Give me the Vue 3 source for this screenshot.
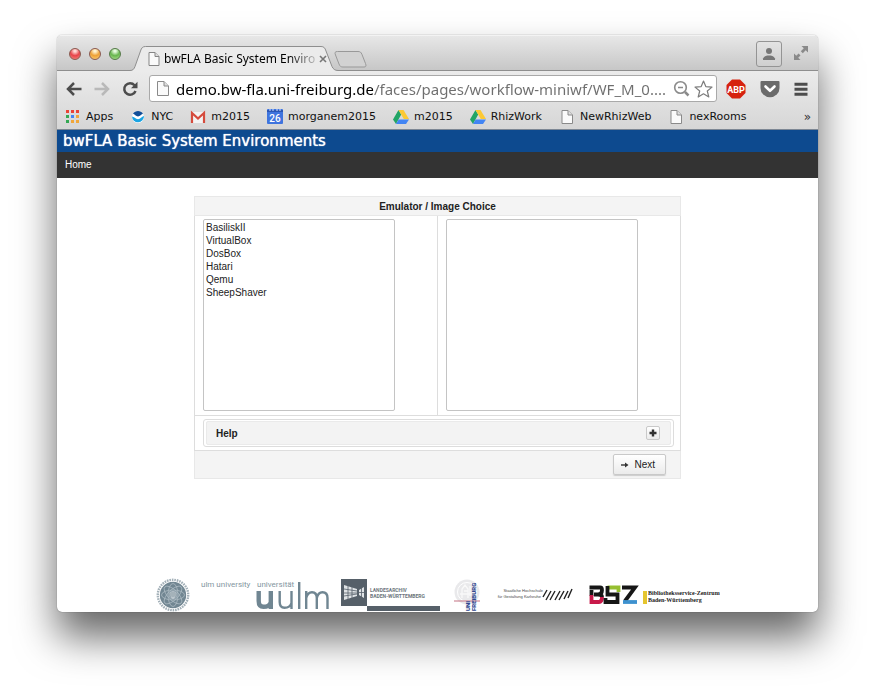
<script setup>
import { ref } from 'vue'

const address = ref('demo.bw-fla.uni-freiburg.de/faces/pages/workflow-miniwf/WF_M_0....')
const emulators = ['BasiliskII', 'VirtualBox', 'DosBox', 'Hatari', 'Qemu', 'SheepShaver']
const emulator = ref([])
const image = ref([])

const bookmarks = [
  { icon: 'apps', label: 'Apps' },
  { icon: 'noaa', label: 'NYC' },
  { icon: 'gmail', label: 'm2015' },
  { icon: 'calendar', label: 'morganem2015' },
  { icon: 'drive', label: 'm2015' },
  { icon: 'drive', label: 'RhizWork' },
  { icon: 'page', label: 'NewRhizWeb' },
  { icon: 'page', label: 'nexRooms' },
]
const appColors = ['#ea4335', '#ea4335', '#ea4335', '#34a853', '#4285f4', '#f0a63a', '#34a853', '#f0a63a', '#f0a63a']
const petals = [0, 45, 90, 135]
</script>

<template>
  <div class="desktop">
    <div class="window">
      <header class="chrome">
        <div class="titlebar">
          <div class="lights">
            <button class="light red" aria-label="Close window"></button>
            <button class="light amber" aria-label="Minimize window"></button>
            <button class="light green" aria-label="Zoom window"></button>
          </div>
          <div class="tab">
            <svg class="tab-shape" width="210" height="25" viewBox="0 0 210 25" aria-hidden="true">
              <path d="M0 25V24.500C3 24.500 4 23 5 20.500L10.500 5C11.500 2 12.500 .5 15.500 .5H191C194 .5 195 2 196 5L202 20.500C203 23 205 24.500 208 24.500H210V25Z" fill="#ebebeb" />
              <path d="M0 24.500C3 24.500 4 23 5 20.500L10.500 5C11.500 2 12.500 .5 15.500 .5H191C194 .5 195 2 196 5L202 20.500C203 23 205 24.500 208 24.500H210" fill="none" stroke="#8e8e8e" />
            </svg>
            <svg class="doc" width="12" height="14" viewBox="0 0 12 14" aria-hidden="true">
              <path d="M1 .5H7L11 4.500V13.500H1Z" fill="#fafafa" stroke="#858585" />
              <path d="M7 .5V4.500H11" fill="#ddd" stroke="#858585" />
            </svg>
            <span class="tab-title">bwFLA Basic System Enviro</span>
            <button class="tab-close" aria-label="Close tab">
              <svg width="8" height="8" viewBox="0 0 8 8"><path d="M1 1L7 7M7 1L1 7" stroke="#777" stroke-width="1.600" /></svg>
            </button>
          </div>
          <button class="new-tab" aria-label="New tab">
            <svg width="34" height="17" viewBox="0 0 34 17">
              <path d="M3.500 .5H24C26 .5 27 1 28 3.500L31.500 12.500C32.500 15 32 16 30 16H9C7 16 6 15.500 5 13L1.500 4C.5 1.500 1 .5 3.500 .5Z" fill="#d2d2d2" stroke="#999" />
            </svg>
          </button>
          <button class="profile" aria-label="Profile">
            <svg width="14" height="14" viewBox="0 0 14 14"><circle cx="7" cy="4" r="3" fill="#777" /><path d="M1 13V11.500C2 9 5 8.500 7 8.500S12 9 13 11.500V13Z" fill="#777" /></svg>
          </button>
          <button class="plain expand" aria-label="Full screen">
            <svg width="16" height="16" viewBox="0 0 16 16"><path d="M8.500 1H15V7.500L12.700 5.200L9.800 8.200L7.800 6.200L10.800 3.300ZM1 8.500L3.300 10.800L5.600 8.500L7.500 10.400L5.200 12.700L7.500 15H1Z" fill="#8a8a8a" /></svg>
          </button>
        </div>

        <div class="toolbar">
          <nav class="history" aria-label="History">
            <button class="plain" aria-label="Back">
              <svg width="16" height="16" viewBox="0 0 16 16"><path d="M8 2L2 8L8 14M2 8H15.500" fill="none" stroke="#4c4c4c" stroke-width="2.500" /></svg>
            </button>
            <button class="plain" aria-label="Forward">
              <svg width="16" height="16" viewBox="0 0 16 16"><path d="M8 2L14 8L8 14M14 8H.5" fill="none" stroke="#b9b9b9" stroke-width="2.500" /></svg>
            </button>
            <button class="plain" aria-label="Reload">
              <svg width="16" height="16" viewBox="0 0 16 16"><path d="M12.500 4.200A5.800 5.800 0 1 0 13.500 10" fill="none" stroke="#4c4c4c" stroke-width="2.500" /><path d="M15.500 .8V7.200H9Z" fill="#4c4c4c" /></svg>
            </button>
          </nav>
          <div class="omnibox">
            <svg class="doc" width="12" height="15" viewBox="0 0 12 15" aria-hidden="true">
              <path d="M.5 .5H7L11.500 5V14.500H.5Z" fill="#fafafa" stroke="#8a8a8a" />
              <path d="M7 .5V5H11.500" fill="#ddd" stroke="#8a8a8a" />
            </svg>
            <input v-model="address" class="address" type="text" aria-label="Address" spellcheck="false" />
            <button class="plain" aria-label="Zoom level">
              <svg width="17" height="17" viewBox="0 0 17 17"><circle cx="7.500" cy="7.500" r="5.800" fill="none" stroke="#8b8b8b" stroke-width="1.600" /><path d="M5 7.500H10" stroke="#8b8b8b" stroke-width="1.600" /><path d="M12 12L15.500 15.500" stroke="#8b8b8b" stroke-width="2.500" /></svg>
            </button>
            <button class="plain" aria-label="Bookmark this page">
              <svg width="19" height="18" viewBox="0 0 19 18"><path d="M9.500 1L11.800 6.600L18 7.100L13.300 11L14.800 17L9.500 13.800L4.200 17L5.700 11L1 7.100L7.200 6.600Z" fill="#fff" stroke="#7d7d7d" stroke-width="1.200" stroke-linejoin="round" /></svg>
            </button>
          </div>
          <div class="extensions">
            <button class="plain" aria-label="Adblock Plus">
              <svg width="20" height="20" viewBox="0 0 20 20"><path d="M6 .5H14L19.500 6V14L14 19.500H6L.5 14V6Z" fill="#d6220f" /><text x="10" y="13.500" text-anchor="middle" font-family="Roboto" font-weight="700" font-size="9" fill="#fff">ABP</text></svg>
            </button>
            <button class="plain" aria-label="Pocket">
              <svg width="20" height="18" viewBox="0 0 20 18"><path d="M1.500 1H18.500Q19.500 1 19.500 2V8A9.500 9.300 0 0 1 .5 8V2Q.5 1 1.500 1Z" fill="#6b6b6b" /><path d="M5.500 6.500L10 10.800L14.500 6.500" fill="none" stroke="#fff" stroke-width="2.600" stroke-linecap="round" stroke-linejoin="round" /></svg>
            </button>
            <button class="plain" aria-label="Menu">
              <svg width="14" height="14" viewBox="0 0 14 14"><path d="M.5 2.200H13.500M.5 7.200H13.500M.5 12.200H13.500" stroke="#4c4c4c" stroke-width="3" /></svg>
            </button>
          </div>
        </div>

        <nav class="bookmarks" aria-label="Bookmarks">
          <a v-for="(b, i) in bookmarks" :key="i" class="bookmark" href="#">
            <svg width="16" height="16" viewBox="0 0 16 16" aria-hidden="true">
              <template v-if="b.icon === 'apps'">
                <rect v-for="(c, n) in appColors" :key="n" :x="1 + (n % 3) * 5" :y="1 + Math.floor(n / 3) * 5" width="3" height="3" :fill="c" />
              </template>
              <template v-else-if="b.icon === 'noaa'">
                <circle cx="8" cy="8" r="6" fill="#fff" />
                <path d="M3 4.800A6 6 0 0 1 13 4.800C11.500 5.200 10 7.500 8 7.500S4.500 5.200 3 4.800Z" fill="#124f99" />
                <path d="M2 7.500C4 7.500 5.500 10.200 8 10.200S11.500 7.500 14 7A6 6 0 1 1 2 7.500Z" fill="#1ba4e2" />
              </template>
              <template v-else-if="b.icon === 'gmail'">
                <rect x="1" y="3" width="14" height="11" fill="#f3f3f3" />
                <path d="M2 14V4L8 9.500L14 4V14" fill="none" stroke="#d54b3d" stroke-width="2.200" />
              </template>
              <template v-else-if="b.icon === 'calendar'">
                <rect x="0" y="0" width="16" height="15" rx="1" fill="#3f74de" />
                <path d="M0 1H16V3H0Z" fill="#2b56b5" />
                <path d="M3 0V2M6 0V2M10 0V2M13 0V2" stroke="#dbe5fa" />
                <text x="8" y="13" text-anchor="middle" font-family="Roboto" font-weight="500" font-size="10" fill="#fff">26</text>
              </template>
              <template v-else-if="b.icon === 'drive'">
                <path d="M5.500 1L0 10.500L3 15L8.200 5.500Z" fill="#22a565" />
                <path d="M5.500 1H10.500L16 10H10.800Z" fill="#fcc934" />
                <path d="M5.600 10.500H16L13 15H3Z" fill="#4285f4" />
              </template>
              <template v-else>
                <path d="M3 1.500H9L13.500 6V14.500H3Z" fill="#fafafa" stroke="#8a8a8a" />
                <path d="M9 1.500V6H13.500" fill="#ddd" stroke="#8a8a8a" />
              </template>
            </svg>
            <span>{{ b.label }}</span>
          </a>
          <button class="plain more" aria-label="More bookmarks">»</button>
        </nav>
      </header>

      <div class="page">
        <h1 class="site-title">bwFLA Basic System Environments</h1>
        <nav class="site-nav"><a href="#">Home</a></nav>

        <main class="content">
          <table class="panel">
            <thead>
              <tr><th colspan="2">Emulator / Image Choice</th></tr>
            </thead>
            <tbody>
              <tr>
                <td>
                  <select v-model="emulator" class="list" multiple aria-label="Emulator">
                    <option v-for="name in emulators" :key="name">{{ name }}</option>
                  </select>
                </td>
                <td>
                  <select v-model="image" class="list" multiple aria-label="Image"></select>
                </td>
              </tr>
              <tr>
                <td colspan="2" class="help-cell">
                  <div class="help">
                    <div class="help-bar">
                      <span>Help</span>
                      <button class="toggle" aria-label="Expand help">
                        <svg width="8" height="8" viewBox="0 0 8 8"><path d="M4 .5V7.500M.5 4H7.500" stroke="#333" stroke-width="2.400" /></svg>
                      </button>
                    </div>
                  </div>
                </td>
              </tr>
            </tbody>
            <tfoot>
              <tr>
                <td colspan="2">
                  <div class="actions">
                    <button class="next">
                      <svg width="8" height="8" viewBox="0 0 8 8" aria-hidden="true"><path d="M0 4H5" stroke="#333" stroke-width="1.400" /><path d="M4 1.500L7.500 4L4 6.500Z" fill="#333" /></svg>
                      <span>Next</span>
                    </button>
                  </div>
                </td>
              </tr>
            </tfoot>
          </table>
        </main>

        <footer class="partners">
          <svg width="34" height="34" viewBox="0 0 34 34" role="img" aria-label="Seal">
            <circle cx="17" cy="17" r="15.200" fill="none" stroke="#a3b0b8" stroke-width="2.400" stroke-dasharray="1.600 .9" />
            <circle cx="17" cy="17" r="13.200" fill="#718692" />
            <ellipse v-for="a in petals" :key="a" cx="17" cy="17" rx="5" ry="11.500" fill="none" stroke="#b4c1c9" stroke-width=".7" :transform="`rotate(${a} 17 17)`" />
            <circle cx="17" cy="17" r="4" fill="#8798a2" stroke="#b4c1c9" stroke-width=".6" />
            <path d="M17 13V21M15 14V18Q15 20 17 20T19 18V14" fill="none" stroke="#dbe2e6" stroke-width=".7" />
          </svg>
          <svg width="130" height="34" viewBox="0 0 130 34" role="img" aria-label="ulm university">
            <g font-family="Roboto, sans-serif" fill="#8496a0">
              <text x="1" y="9" font-size="8">ulm university</text>
              <text x="57" y="9" font-size="8">universität</text>
            </g>
            <g fill="none" stroke="#708692">
              <path d="M58.700 13V23Q58.700 28.800 63.500 28.800Q69 28.800 70.800 25" stroke-width="4.400" />
              <path d="M70.800 13V31" stroke-width="4.400" />
              <path d="M79.700 13V24Q79.700 29.800 84.500 29.800Q90 29.800 91.500 25M91.500 13V31M99.200 4V31M106.200 31V13M106.200 20Q107.500 14.200 112 14.200Q116.800 14.200 116.800 20V31M116.800 20Q118 14.200 122.500 14.200Q127.500 14.200 127.500 20V31" stroke-width="2.400" />
            </g>
          </svg>
          <svg width="102" height="34" viewBox="0 0 102 34" role="img" aria-label="Landesarchiv Baden-Württemberg">
            <rect x="1" y="1" width="26" height="27" fill="#566069" />
            <path d="M4 7L17 11V18L4 22ZM24 9L19 12V17L24 20Z" fill="#dfe3e5" />
            <path d="M4 11L17 13M4 15H17M4 18L17 16M8 8V21M12 9V20M19 14.500H24M21.500 10V19" stroke="#566069" stroke-width=".8" />
            <rect x="27" y="28" width="73" height="5" fill="#566069" />
            <g font-family="Roboto" font-weight="700" font-size="5" fill="#6d767d">
              <text x="30" y="14">LANDESARCHIV</text>
              <text x="30" y="20">BADEN-WÜRTTEMBERG</text>
            </g>
          </svg>
          <svg width="32" height="34" viewBox="0 0 32 34" role="img" aria-label="Uni Freiburg">
            <circle cx="15" cy="14" r="12.500" fill="#e9e9eb" />
            <circle cx="15" cy="14" r="9.500" fill="none" stroke="#fff" />
            <path d="M10 20V11L13 7L16 11V20M12 13H16M8 16H20M18 8V18" fill="none" stroke="#f9f9f9" stroke-width="1.300" />
            <path d="M10 23H28M2 23H10" stroke="#c47383" />
            <g font-family="Roboto" font-weight="900" font-size="6" fill="#30488f">
              <text transform="translate(18 33) rotate(-90)">UNI</text>
              <text transform="translate(24 33) rotate(-90)">FREIBURG</text>
            </g>
          </svg>
          <svg width="82" height="34" viewBox="0 0 82 34" role="img" aria-label="Staatliche Hochschule für Gestaltung Karlsruhe">
            <g font-family="Liberation Sans" font-size="4" fill="#444" text-anchor="end">
              <text x="49" y="14">Staatliche Hochschule</text>
              <text x="47" y="20">für Gestaltung Karlsruhe</text>
            </g>
            <path d="M53 12L49 19M57 13L52 22M61 13L56 22M66 13L61 22M70 13L65 22M74 13L70 21M78 11L74 20" stroke="#222" stroke-width="1.400" />
          </svg>
          <svg width="134" height="34" viewBox="0 0 134 34" role="img" aria-label="BSZ Bibliotheksservice-Zentrum Baden-Württemberg">
            <g fill="none" stroke-width="3.800">
              <path d="M3.500 9.500H14Q16 9.500 16 12Q16 16.500 12 16.500H8M12 16.500Q16 16.500 16 19" stroke="#161616" />
              <path d="M5.500 12V18" stroke="#161616" />
              <path d="M5.500 17V24H13Q16 24 16 19" stroke="#c8194a" />
              <path d="M32.500 14V9.500H21.500" stroke="#96bf30" />
              <path d="M21.500 8V16.500H31.500V24H19.500V20" stroke="#161616" />
              <path d="M36 9.500H49L39 23" stroke="#161616" />
              <path d="M37 24H51" stroke="#3d91cf" />
            </g>
            <rect x="57" y="13" width="4" height="13" fill="#e5c52f" />
            <g font-family="Liberation Serif" font-weight="700" font-size="6" fill="#222">
              <text x="62" y="17">Bibliotheksservice-Zentrum</text>
              <text x="62" y="24">Baden-Württemberg</text>
            </g>
          </svg>
        </footer>
      </div>
    </div>
  </div>
</template>

<style>
body {
  margin: 0;
  background: #fff;
}
</style>

<style scoped>
* {
  box-sizing: border-box;
}
button {
  font: inherit;
  cursor: pointer;
}
svg {
  display: block;
  flex: none;
}
.desktop {
  display: flex;
  min-height: 100vh;
  padding: 35px 57px 79px;
  overflow: hidden;
  font-family: "Liberation Sans", sans-serif;
}
.window {
  display: flex;
  flex: 1;
  flex-direction: column;
  min-width: 0;
  overflow: hidden;
  border-radius: 5px;
  background: #fff;
  box-shadow: 0 0 1px rgba(0, 0, 0, 0.6), 0 25px 40px rgba(0, 0, 0, 0.6);
}
.chrome {
  font-family: "DejaVu Sans", sans-serif;
  background: linear-gradient(#ebebeb 36px, #d6d6d6);
  border-bottom: 1px solid #7d8794;
}
.plain {
  display: flex;
  padding: 0;
  border: 0;
  background: none;
}
.titlebar {
  display: flex;
  align-items: center;
  height: 36px;
  padding: 0 9px 0 12px;
  background: linear-gradient(#e8e8e8, #c6c6c6);
  box-shadow: inset 0 1px #f3f3f3, inset 0 -1px #8e8e8e;
}
.lights {
  display: flex;
  gap: 8px;
  padding-top: 2px;
}
.light {
  width: 12px;
  height: 12px;
  padding: 0;
  border: 1px solid #8b5a50;
  border-radius: 50%;
}
.red {
  background: radial-gradient(circle at 50% 20%, #ffd9d5 10%, #e8434a 50%, #f58a80);
}
.amber {
  background: radial-gradient(circle at 50% 20%, #fff3d0 10%, #eea035 50%, #fbd57e);
}
.green {
  border-color: #557a48;
  background: radial-gradient(circle at 50% 20%, #e8fbe0 10%, #68b64e 50%, #b3e596);
}
.tab {
  position: relative;
  display: flex;
  align-items: center;
  align-self: flex-end;
  gap: 4px;
  width: 210px;
  height: 25px;
  margin-left: 9px;
  padding: 0 17px 0 18px;
}
.tab-shape {
  position: absolute;
  inset: 0;
}
.tab .doc,
.tab-title,
.tab-close {
  position: relative;
}
.tab-title {
  flex: none;
  font-family: "Noto Sans", sans-serif;
  font-size: 12px;
  line-height: 16px;
  white-space: nowrap;
  mask-image: linear-gradient(90deg, #000 82%, rgba(0, 0, 0, 0.2));
}
.tab-close {
  padding: 0;
  border: 0;
  background: none;
}
.new-tab {
  display: flex;
  margin: 12px auto 0 -6px;
  padding: 0;
  border: 0;
  background: none;
}
.profile {
  display: grid;
  place-items: center;
  width: 26px;
  height: 26px;
  margin: 2px 11px 0 0;
  padding: 0;
  border: 1px solid #949494;
  border-radius: 3px;
  background: linear-gradient(#e3e3e3, #cfcfcf);
}
.toolbar {
  display: flex;
  align-items: center;
  gap: 9px;
  height: 33px;
  padding: 2px 10px 0 9px;
}
.history {
  display: flex;
  gap: 12px;
  padding-right: 2px;
}
.omnibox {
  display: flex;
  flex: 1;
  align-items: center;
  gap: 4px;
  min-width: 0;
  height: 27px;
  padding: 0 3px 0 7px;
  border: 1px solid #a9a9a9;
  border-radius: 3px;
  background: #fff;
}
.address {
  flex: 1;
  min-width: 0;
  margin-left: 3px;
  padding: 0;
  border: 0;
  outline: 0;
  font-family: "Noto Sans", sans-serif;
  font-size: 15px;
  line-height: 22px;
  color: transparent;
  background: linear-gradient(90deg, #000 197px, #6e6e6e 197px);
  background-clip: text;
}
.extensions {
  display: flex;
  align-items: center;
  gap: 14px;
}
.bookmarks {
  display: flex;
  align-items: center;
  gap: 17px;
  height: 25px;
  padding: 0 7px 0 8px;
  font-size: 11px;
  line-height: 16px;
}
.bookmark {
  display: flex;
  align-items: center;
  gap: 5px;
  color: #111;
  text-decoration: none;
  white-space: nowrap;
}
.more {
  margin-left: auto;
  font-size: 12px;
  color: #333;
}
.page {
  display: flex;
  flex: 1;
  flex-direction: column;
}
.site-title {
  margin: 0;
  padding: 0 6px;
  font-family: "DejaVu Sans", sans-serif;
  font-size: 15px;
  font-weight: 400;
  line-height: 22px;
  color: #fff;
  text-shadow: 0 0 1px #fff;
  background: #0d4a8f;
}
.site-nav {
  padding: 0 8px;
  font-size: 10px;
  line-height: 26px;
  background: #333;
}
.site-nav a {
  color: #fff;
  text-decoration: none;
}
.content {
  display: flex;
  justify-content: center;
  padding: 18px 0;
}
.panel {
  width: 64%;
  table-layout: fixed;
  border-collapse: collapse;
  font-size: 10px;
  color: #222;
}
.panel th {
  height: 19px;
  padding: 0;
  border: 1px solid #e8e8e8;
  background: #f4f4f4;
}
.panel td {
  padding: 3px 8px 4px;
  border: 1px solid #ddd;
}
.list {
  display: block;
  width: 192px;
  height: 192px;
  padding: 2px 1px;
  border: 1px solid #c4c4c4;
  border-radius: 2px;
  outline: 0;
  font: inherit;
  color: inherit;
  background: #fff;
}
.list option {
  min-height: 13px;
  padding: 0 1px;
  line-height: 13px;
}
.panel .help-cell {
  padding: 3px 6px 3px 8px;
}
.help {
  padding: 1px 2px;
  border: 1px solid #ddd;
  border-radius: 3px;
}
.help-bar {
  display: flex;
  align-items: center;
  justify-content: space-between;
  height: 24px;
  padding: 0 10px 0 9px;
  border: 1px solid #eaeaea;
  border-radius: 2px;
  font-weight: 700;
  background: #f3f3f3;
}
.toggle {
  display: grid;
  place-items: center;
  width: 14px;
  height: 14px;
  padding: 0;
  border: 1px solid #c9c9c9;
  border-radius: 2px;
  background: linear-gradient(#fff, #ececec);
}
.panel tfoot td {
  padding: 3px 14px;
  border-color: #ddd #e8e8e8 #e8e8e8;
  background: #f4f4f4;
}
.actions {
  display: flex;
  justify-content: flex-end;
}
.next {
  display: flex;
  align-items: center;
  gap: 5px;
  height: 21px;
  padding: 0 10px 0 7px;
  border: 1px solid #c9c9c9;
  border-radius: 2px;
  color: #222;
  background: linear-gradient(#fff, #ebebeb);
  box-shadow: 0 1px 1px #ccc;
}
.partners {
  display: flex;
  justify-content: center;
  gap: 10px;
  margin-top: auto;
}
</style>
